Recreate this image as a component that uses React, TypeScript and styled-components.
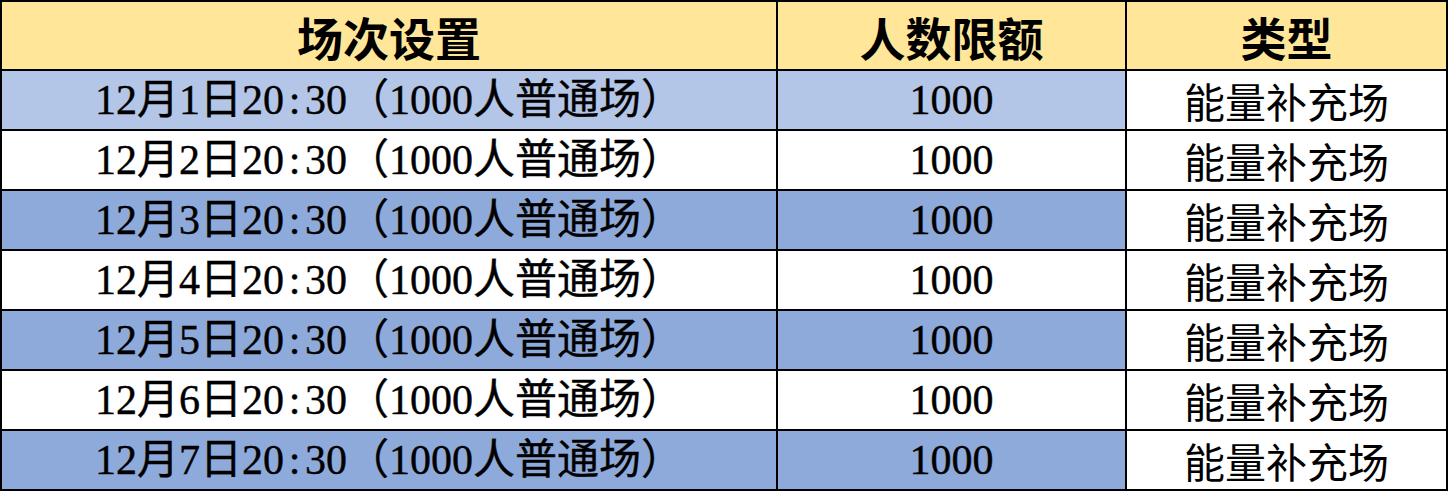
import React from "react";
import styled, { createGlobalStyle } from "styled-components";

const GlobalStyle = createGlobalStyle`
  html, body {
    margin: 0;
    padding: 0;
    background: #ffffff;
  }
`;

const Sheet = styled.div`
  display: grid;
  grid-template-columns: 774px 347px 319px;
  grid-template-rows: 67px repeat(7, 58px);
  gap: 2px;
  padding: 2px;
  width: 1448px;
  box-sizing: border-box;
  background: #000000;
  font-family: "Liberation Serif", "Noto Sans CJK SC", serif;
  color: #000000;
`;

const HeadCell = styled.div`
  display: flex;
  align-items: center;
  justify-content: center;
  background: #ffe699;
  font-family: "Noto Sans CJK SC", sans-serif;
  font-weight: 700;
  font-size: 46px;
  line-height: 1;
`;

type Tone = "light" | "dark" | "white";

const toneColor: Record<Tone, string> = {
  light: "#b4c6e7",
  dark: "#8eaadb",
  white: "#ffffff",
};

const Cell = styled.div<{ $tone: Tone }>`
  display: flex;
  align-items: center;
  justify-content: center;
  background: ${(p) => toneColor[p.$tone]};
  font-size: 42px;
  line-height: 1;
  white-space: nowrap;
  -webkit-text-stroke: 0.4px #000;
`;

// half-width colon, as in the song-style font of the original sheet
const Colon = styled.span`
  display: inline-block;
  width: 0.5em;
  text-align: center;
`;

const TypeCell = styled(Cell)`
  font-family: "Noto Sans CJK SC", sans-serif;
  font-size: 41px;
  -webkit-text-stroke: 0;
`;

const rows = [1, 2, 3, 4, 5, 6, 7];

const toneFor = (day: number): Tone => {
  if (day === 1) return "light";
  return day % 2 === 1 ? "dark" : "white";
};

const App = () => {
  return (
    <>
      <GlobalStyle />
      <Sheet>
        <HeadCell>场次设置</HeadCell>
        <HeadCell>人数限额</HeadCell>
        <HeadCell>类型</HeadCell>
        {rows.map((day) => (
          <React.Fragment key={day}>
            <Cell $tone={toneFor(day)}>
              12月{day}日20<Colon>:</Colon>30（1000人普通场）
            </Cell>
            <Cell $tone={toneFor(day)}>1000</Cell>
            <TypeCell $tone="white">能量补充场</TypeCell>
          </React.Fragment>
        ))}
      </Sheet>
    </>
  );
};

export default App;
